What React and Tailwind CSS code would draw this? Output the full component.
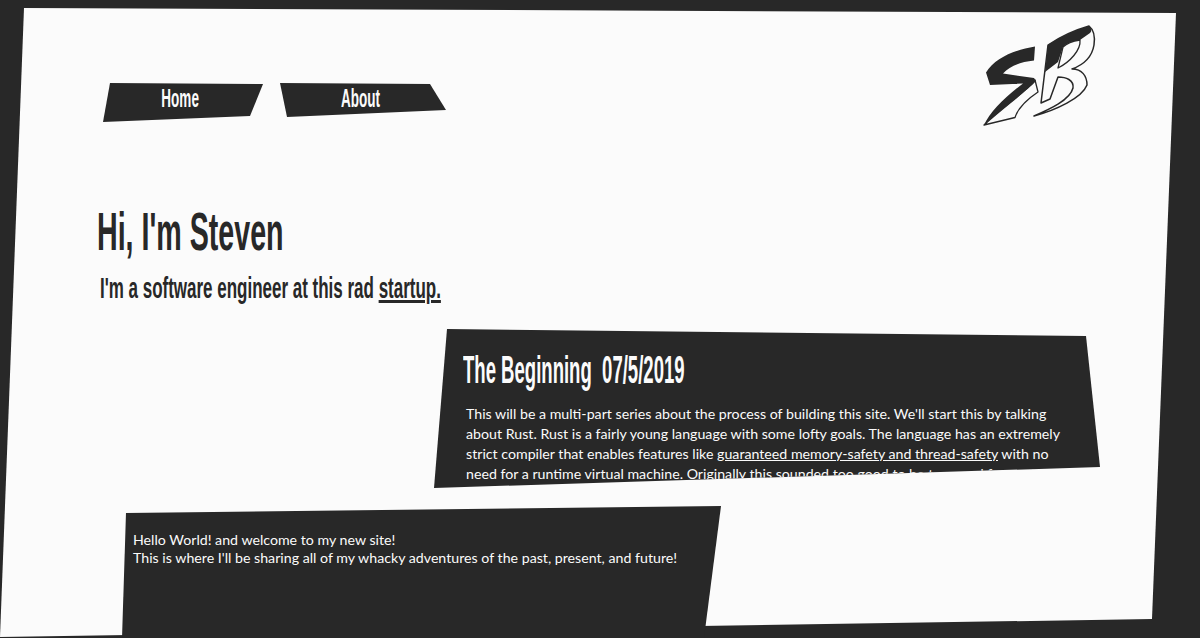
import React from 'react'

const heading = { fontFamily: '"Liberation Sans Narrow", "Liberation Sans", sans-serif' }

const Logo = () => (
  <svg viewBox="980 20 120 110" className="w-[120px] h-[110px]">
    {/* S */}
    <path d="M984 125 L1015 117.5 C1018 108 1026 100 1038 92 L1035 80 C1028 90 1010 102 984 125Z" fill="#fbfbfb" stroke="#282828" strokeWidth="1.3" strokeLinejoin="round" />
    <path d="M986 72.5 C995 58 1014 50 1035 46.5 L1034 60.5 C1020 62 1010 66 1003 73.5 L1034 78 L1036 81 C1028 90 1010 102 984 125 C990 112 1005 97 1023 83.5 L990 85Z" fill="#282828" />
    {/* B */}
    <path d="M1048 45 C1060 37 1075 30 1089 26 C1094 30 1095 38 1094 45 C1092 57 1083 65 1072 69 C1082 69 1087 76 1087 85 C1082 98 1056 110 1034 116 C1050 109 1070 100 1073 88 C1074 80 1066 77 1058 77 L1050 99 L1041 103 Z" fill="#fbfbfb" stroke="#282828" strokeWidth="1.5" strokeLinejoin="round" />
    <path d="M1048 45 C1060 37 1075 30 1089 26 C1092 29 1092 31 1090 33 L1080 40 C1073 41 1067 43 1063 47 L1058 62 L1045 72Z" fill="#282828" />
    <path d="M1063 47 C1067 43 1073 41 1080 40 C1081 50 1070 62 1058 68 Z" fill="#fbfbfb" stroke="#282828" strokeWidth="1.3" strokeLinejoin="round" />
  </svg>
)

const NavItem = ({ label, className }) => (
  <a href="#" className={`flex items-center justify-center bg-[#282828] text-[#fbfbfb] text-[26px] font-bold ${className}`}>
    <span style={heading} className="inline-block scale-x-[0.52]">{label}</span>
  </a>
)

export default function App() {
  return (
    <div className="relative h-[638px] overflow-hidden bg-[#282828] font-['Lato',sans-serif]">
      {/* white sheet behind the page, content is allowed to run past its edge */}
      <div className="absolute inset-0 bg-[#fbfbfb] [clip-path:polygon(24px_8px,1176px_13px,1152px_619px,0px_637px)]"></div>

      <div className="relative flex flex-col pl-[97px]">
        <header className="flex justify-between items-start pt-[20px] pl-[6px] pr-[100px]">
          <nav className="flex gap-[17px] mt-[62px]">
            <NavItem label="Home" className="w-[160px] h-[40px] pb-[8px] pr-[5px] [clip-path:polygon(7px_1px,160px_2px,147px_34px,0px_40px)]" />
            <NavItem label="About" className="w-[166px] h-[35px] pb-[3px] pr-[4px] [clip-path:polygon(0px_1px,150px_2px,166px_28px,7px_35px)]" />
          </nav>
          <Logo />
        </header>

        <h1 style={heading} className="mt-[71px] text-[#282828] text-[54px] leading-[60px] font-bold origin-left scale-x-[0.53] whitespace-nowrap">Hi, I'm Steven</h1>
        <h2 style={heading} className="mt-[9px] ml-[3px] text-[#282828] text-[30px] leading-[36px] font-bold origin-left scale-x-[0.566] whitespace-nowrap">
          I'm a software engineer at this rad <a href="#" className="underline">startup.</a>
        </h2>

        <article className="mt-[23px] ml-[337px] w-[666px] h-[159px] pl-[32px] pr-[24px] pt-[17px] bg-[#282828] text-[#fbfbfb] [clip-path:polygon(13px_0px,652px_7px,666px_138px,0px_159px)]">
          <h3 style={heading} className="-ml-[3px] text-[38px] leading-[48px] font-bold origin-left scale-x-[0.488] whitespace-nowrap">The Beginning&nbsp; 07/5/2019</h3>
          <p className="mt-[10px] text-[14.2px] leading-[20px]">
            This will be a multi-part series about the process of building this site. We'll start this by talking about Rust. Rust is a fairly young language with some lofty goals. The language has an extremely strict compiler that enables features like <a href="#" className="underline">guaranteed memory-safety and thread-safety</a> with no need for a runtime virtual machine. Originally this sounded too good to be true, and for me it was.
          </p>
        </article>

        <section className="mt-[18px] ml-[25px] w-[599px] h-[132px] shrink-0 pl-[11px] pt-[25px] bg-[#282828] text-[#fbfbfb] text-[14.2px] leading-[18px] [clip-path:polygon(4px_7px,599px_0px,582px_132px,0px_132px)]">
          <p>Hello World! and welcome to my new site!</p>
          <p>This is where I'll be sharing all of my whacky adventures of the past, present, and future!</p>
        </section>
      </div>
    </div>
  )
}
